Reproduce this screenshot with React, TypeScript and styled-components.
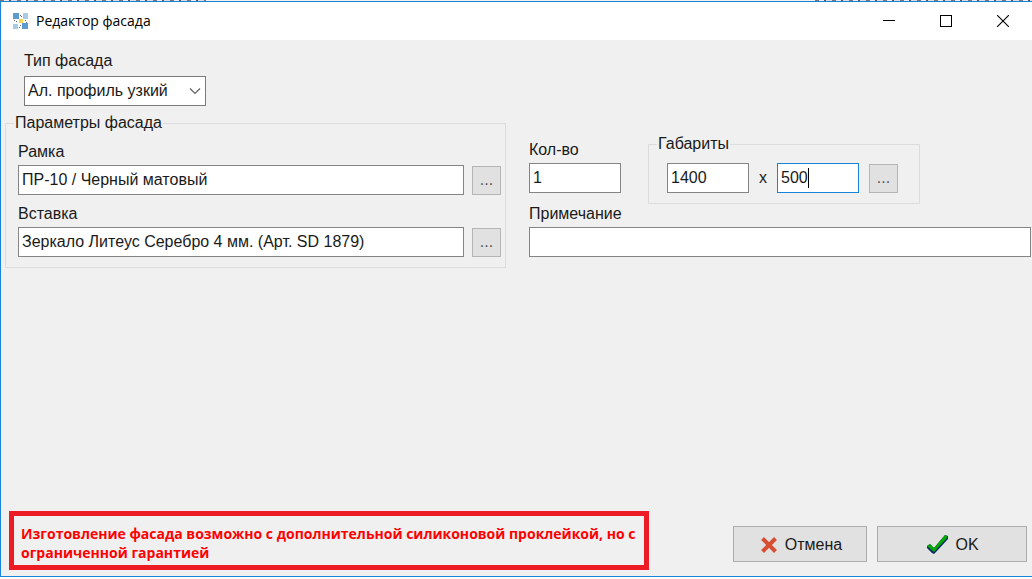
import React, { useState } from "react";
import styled, { createGlobalStyle } from "styled-components";

const GlobalStyle = createGlobalStyle`
  * { box-sizing: border-box; }
  body { margin: 0; background: #fff; }
  body, button, input, select { font-family: "Liberation Sans", Arial, sans-serif; font-size: 16px; color: #1a1a1a; }
`;

const Screen = styled.div`
  display: flex;
  flex-direction: column;
  min-height: 100vh;
  padding-bottom: 2px;
`;

const Backdrop = styled.div`
  height: 1px;
  display: flex;
  justify-content: space-between;
  background: #f0f0f0;
`;

const BackdropMarks = styled.div<{ $width: string }>`
  width: ${(p) => p.$width};
  background: repeating-linear-gradient(90deg, #777 0 4px, #eee 4px 9px, #556 9px 11px, #ddd 11px 17px);
`;

const Dialog = styled.form`
  flex: 1;
  display: flex;
  flex-direction: column;
  background: #f0f0f0;
  border: 1px solid #1883d7;
  border-right: 0;
`;

const TitleBar = styled.header`
  display: flex;
  align-items: center;
  height: 38px;
  padding: 0 1px 0 11px;
  background: #fff;
`;

const Title = styled.h1`
  flex: 1;
  margin: 0 0 0 7px;
  font: 400 14px/20px "Open Sans", "Noto Sans", sans-serif;
  color: #000;
`;

const WindowButton = styled.button`
  display: flex;
  align-items: center;
  justify-content: center;
  width: 57px;
  height: 38px;
  padding: 0;
  border: 0;
  background: none;
`;

const Body = styled.main`
  flex: 1;
  padding: 11px 1px 0 4px;
`;

const TypeField = styled.div`
  display: flex;
  flex-direction: column;
  align-items: flex-start;
  padding-left: 19px;
`;

const Label = styled.label`
  display: block;
  line-height: 20px;
  margin-bottom: 3px;
`;

const SelectBox = styled.div`
  display: grid;
  margin-top: 2px;
  width: 182px;
  height: 30px;
  & > * { grid-area: 1 / 1; }
  svg { align-self: center; justify-self: end; margin-right: 5px; pointer-events: none; }
`;

const Select = styled.select`
  appearance: none;
  padding: 0 20px 1px 3px;
  border: 1px solid #7a7a7a;
  border-radius: 0;
  background: #fff;
`;

const Columns = styled.div`
  display: grid;
  grid-template-columns: 501fr 502fr;
  align-items: start;
  gap: 23px;
  margin-top: 8px;
`;

const Group = styled.fieldset<{ $pad: string }>`
  min-width: 0;
  margin: 0;
  padding: ${(p) => p.$pad};
  border: 1px solid #dcdcdc;
`;

const Legend = styled.legend`
  padding: 0 1px;
  line-height: 18px;
`;

const Row = styled.div`
  display: flex;
  align-items: center;
  gap: 8px;
`;

const DimensionRow = styled(Row)`
  gap: 10px;
  padding-left: 10px;
`;

const Field = styled.div`
  padding-left: 4px;
  & + & { margin-top: 9px; }
`;

const TextBox = styled.input<{ $width?: number; $active?: boolean }>`
  ${(p) => (p.$width ? `width: ${p.$width}px;` : "flex: 1; width: 100%;")}
  min-width: 0;
  height: 30px;
  padding: 0 3px;
  border: 1px solid ${(p) => (p.$active ? "#1883d7" : "#858585")};
  border-radius: 0;
  outline: 0;
  background: #fff;
`;

const CaretBox = styled.div`
  position: relative;
  display: flex;
`;

const Caret = styled.span`
  position: absolute;
  top: 5px;
  left: 31px;
  width: 1px;
  height: 20px;
  background: #000;
`;

const MoreButton = styled.button`
  flex: none;
  width: 29px;
  height: 29px;
  padding: 0;
  border: 1px solid #b5b5b5;
  background: #e1e1e1;
  color: #555;
  line-height: 26px;
`;

const Side = styled.div`
  min-width: 0;
  padding-top: 21px;
`;

const SizeRow = styled.div`
  display: flex;
  align-items: flex-start;
  gap: 27px;
`;

const Quantity = styled.div`
  padding-top: 5px;
`;

const Footer = styled.footer`
  display: flex;
  align-items: center;
  gap: 10px;
  padding: 0 5px 6px 8px;
`;

const Warning = styled.p`
  flex: 0 1 640px;
  min-height: 59px;
  margin: 0 auto 0 0;
  padding: 8px 7px 3px;
  border: 5px solid #ed1c24;
  color: #f00;
  font: 700 14px/19px "Open Sans", "Noto Sans", sans-serif;
`;

const ActionButton = styled.button<{ $width: number }>`
  flex: none;
  display: flex;
  align-items: center;
  justify-content: center;
  gap: 7px;
  width: ${(p) => p.$width}px;
  height: 36px;
  margin-top: 6px;
  padding: 2px 0 0 2px;
  border: 1px solid #adadad;
  background: #e1e1e1;
`;

const AppIcon = () => (
  <svg width="17" height="17" viewBox="0 0 17 17" aria-hidden="true">
    <path fill="#5b9bd0" d="M1 0h6v6H1zM10 10h6v6h-6z" />
    <path fill="#a9cbe3" d="M11 0h5v6h-5zM1 11h5v5H1z" />
    <path fill="#f5d84e" d="M7 6h4v4H7z" />
    <path fill="#6d6470" d="M8 2h1v1H8zM9 3h1v1H9zM2 7h1v1H2zM4 8h1v1H4zM13 7h1v1h-1zM14 9h1v1h-1zM8 12h1v1H8zM7 14h1v1H7z" />
  </svg>
);

export default function App() {
  const [frame, setFrame] = useState("ПР-10 / Черный матовый");
  const [panel, setPanel] = useState("Зеркало Литеус Серебро 4 мм. (Арт. SD 1879)");

  return (
    <Screen>
      <GlobalStyle />
      <Backdrop>
        <BackdropMarks $width="20%" />
        <BackdropMarks $width="21%" />
      </Backdrop>
      <Dialog onSubmit={(e) => e.preventDefault()}>
        <TitleBar>
          <AppIcon />
          <Title>Редактор фасада</Title>
          <WindowButton type="button" aria-label="Свернуть">
            <svg width="12" height="12" shapeRendering="crispEdges"><path d="M0 5.5h12" stroke="#000" /></svg>
          </WindowButton>
          <WindowButton type="button" aria-label="Развернуть">
            <svg width="12" height="12" shapeRendering="crispEdges"><path d="M.5.5h11v11H.5z" fill="none" stroke="#000" /></svg>
          </WindowButton>
          <WindowButton type="button" aria-label="Закрыть">
            <svg width="12" height="12"><path d="M0 0l12 12M12 0L0 12" stroke="#000" strokeWidth="1.1" /></svg>
          </WindowButton>
        </TitleBar>

        <Body>
          <TypeField>
            <Label htmlFor="type">Тип фасада</Label>
            <SelectBox>
              <Select id="type">
                <option>Ал. профиль узкий</option>
              </Select>
              <svg width="12" height="8" viewBox="0 0 12 8"><path d="M1 1.5l5 5 5-5" fill="none" stroke="#606060" strokeWidth="1.2" /></svg>
            </SelectBox>
          </TypeField>

          <Columns>
            <Group $pad="10px 4px 10px 8px">
              <Legend>Параметры фасада</Legend>
              <Field>
                <Label htmlFor="frame">Рамка</Label>
                <Row>
                  <TextBox id="frame" value={frame} onChange={(e) => setFrame(e.target.value)} />
                  <MoreButton type="button" aria-label="Выбрать рамку">...</MoreButton>
                </Row>
              </Field>
              <Field>
                <Label htmlFor="panel">Вставка</Label>
                <Row>
                  <TextBox id="panel" value={panel} onChange={(e) => setPanel(e.target.value)} />
                  <MoreButton type="button" aria-label="Выбрать вставку">...</MoreButton>
                </Row>
              </Field>
            </Group>

            <Side>
              <SizeRow>
                <Quantity>
                  <Label htmlFor="count">Кол-во</Label>
                  <TextBox id="count" $width={92} defaultValue="1" />
                </Quantity>
                <Group $pad="10px 21px 10px 8px">
                  <Legend>Габариты</Legend>
                  <DimensionRow>
                    <TextBox $width={82} defaultValue="1400" aria-label="Высота" />
                    <span>x</span>
                    <CaretBox>
                      <TextBox $width={82} $active defaultValue="500" aria-label="Ширина" />
                      <Caret />
                    </CaretBox>
                    <MoreButton type="button" aria-label="Выбрать габариты">...</MoreButton>
                  </DimensionRow>
                </Group>
              </SizeRow>
              <Label htmlFor="note">Примечание</Label>
              <TextBox id="note" />
            </Side>
          </Columns>
        </Body>

        <Footer>
          <Warning>
            Изготовление фасада возможно с дополнительной силиконовой проклейкой, но с ограниченной гарантией
          </Warning>
          <ActionButton type="button" $width={134}>
            <svg width="18" height="18" viewBox="0 0 18 18"><path d="M2.500 2.500l13 13M15.500 2.500l-13 13" stroke="#d64f33" strokeWidth="4" /></svg>
            Отмена
          </ActionButton>
          <ActionButton type="submit" $width={150}>
            <svg width="21" height="20" viewBox="0 0 21 20">
              <path d="M0 11l3-2 4 4L18 0l3 1v3L9 17l-2 2-2-1-5-5z" fill="#0a2a63" />
              <path d="M0 11l3-2 4 4L18 0l2 1v2L7 17z" fill="#06a806" />
            </svg>
            OK
          </ActionButton>
        </Footer>
      </Dialog>
    </Screen>
  );
}
